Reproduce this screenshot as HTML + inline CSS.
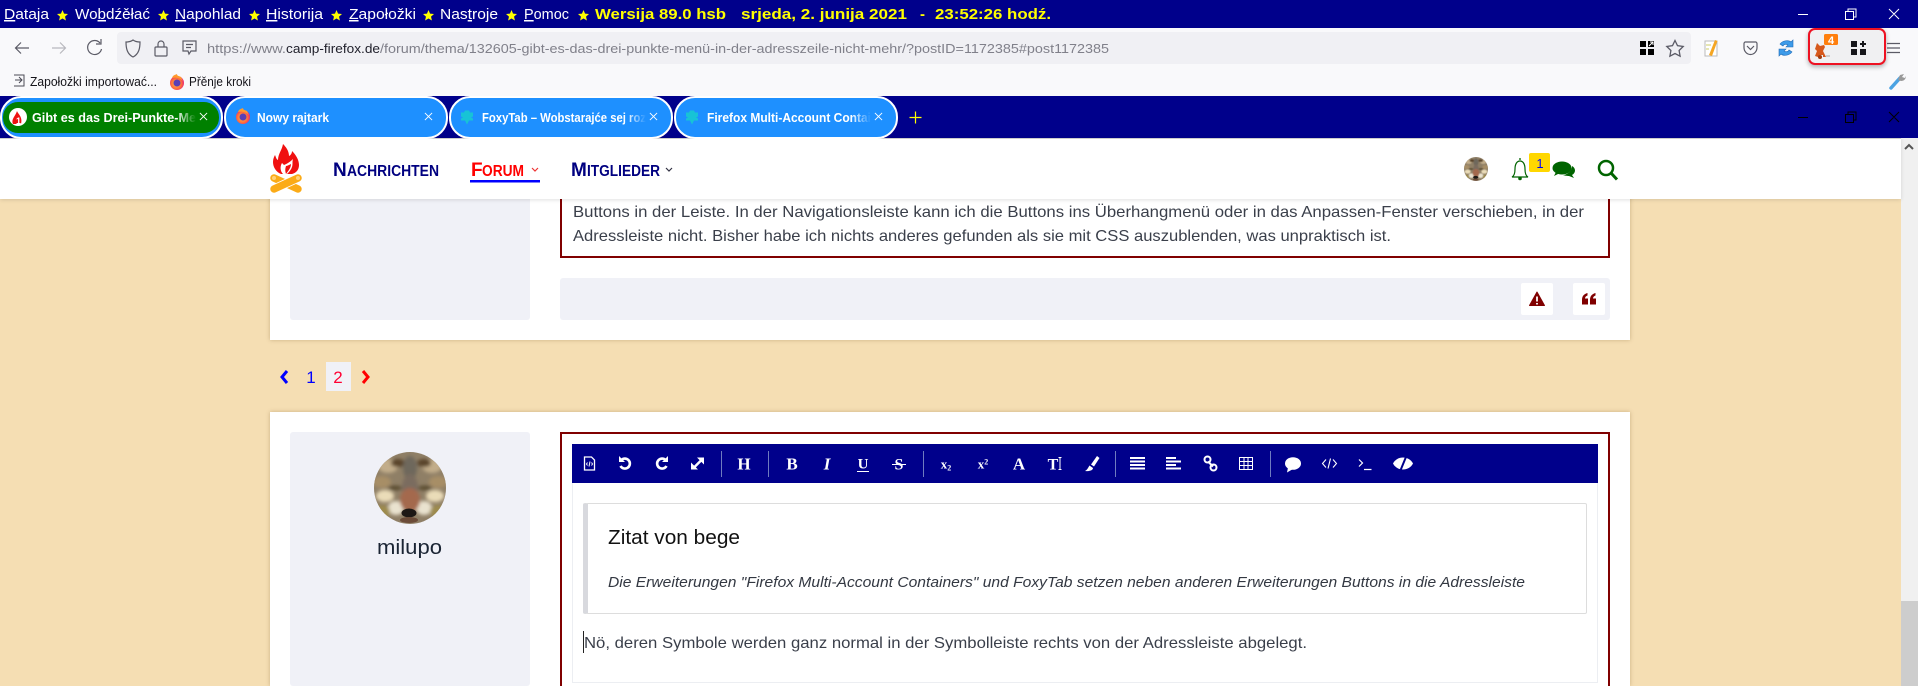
<!DOCTYPE html>
<html lang="de"><head><meta charset="utf-8"><title>Camp Firefox</title>
<style>
html,body{margin:0;padding:0;background:#f5deb3;width:1918px;height:686px;overflow:hidden}
.b{position:absolute;box-sizing:border-box}
svg{position:absolute;left:0;top:0}
text{font-family:"Liberation Sans",sans-serif;white-space:pre}
.u{text-decoration:underline}
</style></head><body>
<div class="b" style="left:0;top:0;width:1918px;height:28px;background:#00008b"></div>
<div class="b" style="left:0;top:28px;width:1918px;height:68px;background:#f9f9fb"></div>
<div class="b" style="left:117px;top:32px;width:1574px;height:32px;background:#f0f0f4;border-radius:4px"></div>
<div class="b" style="left:0;top:96px;width:1918px;height:42px;background:#00008b"></div>
<div class="b" style="left:1901px;top:138px;width:17px;height:548px;background:#f0f0f0"></div>
<div class="b" style="left:1901px;top:601px;width:17px;height:85px;background:#cdcdcd"></div>
<div class="b" style="left:270px;top:150px;width:1360px;height:190px;background:#fff;box-shadow:0 0 4px rgba(120,90,40,.35)"></div>
<div class="b" style="left:290px;top:190px;width:240px;height:130px;background:#f0f1f7;border-radius:3px"></div>
<div class="b" style="left:560px;top:190px;width:1050px;height:68px;border:solid #800000;border-width:0 2px 2px 2px"></div>
<div class="b" style="left:560px;top:278px;width:1050px;height:42px;background:#f0f1f7;border-radius:3px"></div>
<div class="b" style="left:1521px;top:283px;width:32px;height:32px;background:#fff;border-radius:2px"></div>
<div class="b" style="left:1573px;top:283px;width:32px;height:32px;background:#fff;border-radius:2px"></div>
<div class="b" style="left:0;top:138px;width:1901px;height:61px;background:#fff;box-shadow:0 1px 4px rgba(0,0,0,.12);border-top:1px solid #ccc"></div>
<div class="b" style="left:326px;top:362px;width:25px;height:29px;background:#f0f1f7"></div>
<div class="b" style="left:270px;top:412px;width:1360px;height:274px;background:#fff;box-shadow:0 0 4px rgba(120,90,40,.35)"></div>
<div class="b" style="left:290px;top:432px;width:240px;height:254px;background:#f0f1f7;border-radius:3px"></div>
<div class="b" style="left:560px;top:432px;width:1050px;height:254px;border:solid #800000;border-width:2px 2px 0 2px"></div>
<div class="b" style="left:572px;top:444px;width:1026px;height:39px;background:#00008b"></div>
<div class="b" style="left:572px;top:483px;width:1026px;height:200px;border:solid #eceef2;border-width:0 1px 1px 1px"></div>
<div class="b" style="left:583px;top:503px;width:1004px;height:111px;background:#fff;border:1px solid #ddd;border-left:5px solid #d8d9de;border-radius:2px"></div>
<div class="b" style="left:1808px;top:28px;width:78px;height:37px;border:2px solid #ee1122;border-radius:7px;background:#f0f0f2;box-shadow:0 2px 5px rgba(0,0,0,.3)"></div>

<svg width="1918" height="686" viewBox="0 0 1918 686" xmlns="http://www.w3.org/2000/svg">
<defs>
<symbol id="st" viewBox="0 0 10 10"><path d="M5 0l1.400 3.300 3.600.3-2.700 2.400.8 3.500L5 7.700 1.900 9.500l.8-3.500L0 3.600l3.600-.3z" fill="#ff0"/></symbol>
<linearGradient id="f1"><stop offset="0" stop-color="#008000" stop-opacity="0"/><stop offset="1" stop-color="#008000"/></linearGradient>
<linearGradient id="f2"><stop offset="0" stop-color="#1e90ff" stop-opacity="0"/><stop offset="1" stop-color="#1e90ff"/></linearGradient>
<radialGradient id="ff" cx=".45" cy=".55" r=".6"><stop offset="0" stop-color="#ffbd4f"/><stop offset=".6" stop-color="#ff7139"/><stop offset="1" stop-color="#e31587"/></radialGradient>
<filter id="bl" x="-20%" y="-20%" width="140%" height="140%"><feGaussianBlur stdDeviation="1.800"/></filter>
<clipPath id="cc"><circle cx="36" cy="36" r="36"/></clipPath>
<symbol id="wolf" viewBox="0 0 72 72"><g clip-path="url(#cc)"><rect width="72" height="72" fill="#8f7f66"/><g filter="url(#bl)">
<ellipse cx="14" cy="14" rx="10" ry="7" fill="#c2ad8a"/><ellipse cx="58" cy="14" rx="10" ry="7" fill="#c2ad8a"/>
<ellipse cx="24" cy="11" rx="7" ry="4" fill="#5a442c"/><ellipse cx="50" cy="11" rx="7" ry="4" fill="#5a442c"/>
<ellipse cx="36" cy="16" rx="7" ry="12" fill="#6e675c"/><ellipse cx="36" cy="36" rx="8" ry="14" fill="#7a6c5e"/>
<ellipse cx="8" cy="30" rx="9" ry="6" fill="#a78e66"/><ellipse cx="64" cy="30" rx="9" ry="6" fill="#a78e66"/>
<ellipse cx="11" cy="44" rx="9" ry="6" fill="#eadcb8"/><ellipse cx="61" cy="44" rx="9" ry="6" fill="#eadcb8"/>
<ellipse cx="22" cy="56" rx="8" ry="7" fill="#e9e2cf"/><ellipse cx="50" cy="56" rx="8" ry="7" fill="#e9e2cf"/>
<ellipse cx="8" cy="60" rx="8" ry="7" fill="#9d8b4d"/><ellipse cx="64" cy="60" rx="8" ry="7" fill="#9d8b4d"/>
<ellipse cx="36" cy="48" rx="10" ry="12" fill="#a4694e"/>
<ellipse cx="21" cy="36" rx="7" ry="2.500" fill="#5c4d30"/><ellipse cx="51" cy="36" rx="7" ry="2.500" fill="#5c4d30"/>
</g><ellipse cx="35" cy="61" rx="7.500" ry="4.500" fill="#1d1815"/><ellipse cx="35" cy="68" rx="9" ry="3" fill="#6b4b38"/></g></symbol>
<symbol id="firefox" viewBox="0 0 16 16"><circle cx="8" cy="9" r="7" fill="url(#ff)"/><path d="M3 4C4 1 6 1 8 0c0 2 2 2 4 3l2 4C11 4 7 3 3 4z" fill="#ff9a2e"/><circle cx="8" cy="9" r="3.500" fill="#5b3fb5"/></symbol>
<symbol id="puz" viewBox="0 0 16 16"><path d="M2 3h3l1-2h4l1 2h3v4l-2 1 2 1v2h-4l-2 4-2-4H2V9l2-1-2-1z" fill="#17c3d6"/></symbol>
<symbol id="x" viewBox="0 0 10 10"><path d="M1 1l8 8M9 1l-8 8" stroke="#fff" stroke-width="1"/></symbol>
</defs>

<!-- title bar -->
<g fill="#fff" font-size="15">
<text x="4" y="19" textLength="45" lengthAdjust="spacingAndGlyphs"><tspan class="u">D</tspan>ataja</text>
<text x="75" y="19" textLength="75" lengthAdjust="spacingAndGlyphs">Wo<tspan class="u">b</tspan>dźěłać</text>
<text x="175" y="19" textLength="66" lengthAdjust="spacingAndGlyphs"><tspan class="u">N</tspan>apohlad</text>
<text x="266" y="19" textLength="57" lengthAdjust="spacingAndGlyphs"><tspan class="u">H</tspan>istorija</text>
<text x="349" y="19" textLength="67" lengthAdjust="spacingAndGlyphs"><tspan class="u">Z</tspan>apołožki</text>
<text x="440" y="19" textLength="58" lengthAdjust="spacingAndGlyphs">Nas<tspan class="u">t</tspan>roje</text>
<text x="524" y="19" textLength="45" lengthAdjust="spacingAndGlyphs"><tspan class="u">P</tspan>omoc</text>
</g>
<use href="#st" x="57" y="10" width="11" height="11"/><use href="#st" x="158" y="10" width="11" height="11"/><use href="#st" x="249" y="10" width="11" height="11"/><use href="#st" x="331" y="10" width="11" height="11"/><use href="#st" x="423" y="10" width="11" height="11"/><use href="#st" x="506" y="10" width="11" height="11"/><use href="#st" x="578" y="10" width="11" height="11"/>
<g fill="#ff0" font-size="15" font-weight="bold">
<text x="595" y="19" textLength="131" lengthAdjust="spacingAndGlyphs">Wersija 89.0 hsb</text>
<text x="741" y="19" textLength="166" lengthAdjust="spacingAndGlyphs">srjeda, 2. junija 2021</text>
<text x="920" y="19">-</text>
<text x="935" y="19" textLength="116" lengthAdjust="spacingAndGlyphs">23:52:26 hodź.</text>
</g>
<g stroke="#fff" fill="none" stroke-width="1">
<path d="M1798 14.500h10M1845.500 11.500h8v8h-8zM1848 11.500v-2.500h8v8h-2.500M1889 9l10 10M1899 9l-10 10"/>
</g>

<!-- nav icons -->
<g fill="none" stroke="#5b5b66" stroke-width="1.200">
<path d="M29 48H16M21 42.500l-5.500 5.500 5.500 5.500"/>
<path d="M52 48h13M60 42.500l5.500 5.500-5.500 5.500" stroke="#b8b8be"/>
<path d="M100 43a7 7 0 1 0 1.500 6M101 39v5h-5"/>
<path d="M133 40c-2 1.500-4 2-7 2 0 6 1 12 7 15 6-3 7-9 7-15-3 0-5-.5-7-2z"/>
<rect x="155" y="47" width="12" height="9" rx="1"/><path d="M158 47v-3a3 3 0 0 1 6 0v3"/>
<path d="M183 41h13v10h-5l-2 3-1-3h-5zM186 44.500h7M186 47.500h5"/>
<path d="M1675 40.500l2.500 5.200 5.700.8-4.100 4 1 5.700-5.100-2.700-5.100 2.700 1-5.700-4.100-4 5.700-.8z" stroke-width="1.300"/>
<path d="M1745 42h11a2 2 0 0 1 1 1.500v4c0 4-3 7-6.500 7s-6.500-3-6.500-7v-4a2 2 0 0 1 1-1.500zM1747 46l3.500 3.500 3.500-3.500"/>
<path d="M1887 43.500h13M1887 48h13M1887 52.500h13" stroke-width="1.200"/>
</g>
<g font-size="13" fill="#80808a">
<text x="207" y="53" textLength="79" lengthAdjust="spacingAndGlyphs">https://www.</text>
<text x="286" y="53" textLength="94" lengthAdjust="spacingAndGlyphs" fill="#1f1f2a">camp-firefox.de</text>
<text x="380" y="53" textLength="729" lengthAdjust="spacingAndGlyphs">/forum/thema/132605-gibt-es-das-drei-punkte-menü-in-der-adresszeile-nicht-mehr/?postID=1172385#post1172385</text>
</g>
<g fill="#000"><rect x="1640" y="41" width="6" height="6"/><rect x="1648" y="41" width="6" height="6"/><rect x="1640" y="49" width="6" height="6"/><rect x="1648" y="49" width="6" height="6"/></g>
<path d="M1649 46l4-4M1650 42h3v3" stroke="#fff" stroke-width="1" fill="none"/>
<!-- notepad -->
<path d="M1705 41h12v15h-12z" fill="#fff" stroke="#bbb"/><path d="M1709 55l6-15 2.500 1-5.500 15z" fill="#f5a623"/><path d="M1706 45h5M1706 49h3" stroke="#cc6"/>
<!-- sync -->
<path d="M1780 44c3-4 9-4 11-2l2-2v7h-7l2-2c-2-1-4-1-5 1z" fill="#3d9be9" stroke="#1e6bb8" stroke-width=".6"/><path d="M1792 52c-3 4-9 4-11 2l-2 2v-7h7l-2 2c2 1 4 1 5-1z" fill="#3d9be9" stroke="#1e6bb8" stroke-width=".6"/>
<!-- fox + badge -->
<path d="M1817 43l3 3 4-1 1 2-2 4 3 6h-3v-2h-3l-2 2-3-1 2-5-2-2z" fill="#d6581c"/><circle cx="1820" cy="57" r="2" fill="#a33c0f"/><path d="M1826 56h4" stroke="#aaa"/>
<rect x="1824" y="34" width="14" height="11" rx="1.500" fill="#ff7f0e"/>
<text x="1831" y="44" fill="#fff" font-size="11" font-weight="bold" text-anchor="middle">4</text>
<g fill="#16161a"><rect x="1851" y="41" width="6" height="6"/><rect x="1851" y="49" width="6" height="6"/><rect x="1860" y="49" width="6" height="6"/><path d="M1862 41h2v2h2v2h-2v2h-2v-2h-2v-2h2z"/></g>

<!-- bookmarks -->
<path d="M15 80h7M19 77l3 3-3 3M14 75h10v11H14" fill="none" stroke="#4a4a55"/>
<text x="30" y="86" font-size="12.500" fill="#15141a" textLength="127" lengthAdjust="spacingAndGlyphs">Zapołožki importować...</text>
<use href="#firefox" x="169" y="74" width="16" height="16"/>
<text x="189" y="86" font-size="12.500" fill="#15141a" textLength="62" lengthAdjust="spacingAndGlyphs">Přěnje kroki</text>
<path d="M1891 88l9-10" stroke="#4ba3e3" stroke-width="3.500" stroke-linecap="round"/><path d="M1898 80l2-5 4-1-2 3 3 1 1-2c0 3-2 5-5 5z" fill="#999"/>

<!-- tabs -->
<g fill="#1e90ff" stroke="#fff" stroke-width="2">
<rect x="1" y="97" width="221" height="41" rx="20"/>
<rect x="225" y="97" width="222" height="41" rx="20"/>
<rect x="450" y="97" width="222" height="41" rx="20"/>
<rect x="675" y="97" width="222" height="41" rx="20"/>
</g>
<rect x="3" y="102" width="216" height="31" rx="15" fill="#008000"/>
<circle cx="18" cy="117" r="9" fill="#fff"/><path d="M13 124c-2-5 2-7 4-13 1 3 6 6 4 13z" fill="#e11"/><text x="16" y="124" fill="#fff" font-size="9" font-weight="bold">1</text>
<use href="#firefox" x="235" y="108" width="16" height="16"/>
<use href="#puz" x="459" y="109" width="16" height="17"/>
<use href="#puz" x="684" y="109" width="16" height="17"/>
<g fill="#fff" font-size="13" font-weight="bold">
<text x="32" y="122" textLength="164" lengthAdjust="spacingAndGlyphs">Gibt es das Drei-Punkte-Me</text>
<text x="257" y="122" textLength="72" lengthAdjust="spacingAndGlyphs">Nowy rajtark</text>
<text x="482" y="122" textLength="164" lengthAdjust="spacingAndGlyphs">FoxyTab – Wobstarajće sej roz</text>
<text x="707" y="122" textLength="164" lengthAdjust="spacingAndGlyphs">Firefox Multi-Account Contai</text>
</g>
<rect x="176" y="106" width="20" height="22" fill="url(#f1)"/>
<rect x="626" y="106" width="20" height="22" fill="url(#f2)"/>
<rect x="851" y="106" width="20" height="22" fill="url(#f2)"/>
<use href="#x" x="199" y="112" width="9" height="9"/><use href="#x" x="424" y="112" width="9" height="9"/><use href="#x" x="649" y="112" width="9" height="9"/><use href="#x" x="874" y="112" width="9" height="9"/>
<path d="M909.500 117.500h12M915.500 111.500v12" stroke="#ff0" stroke-width="1.200"/>
<path d="M1798 117.500h10M1845.500 114.500h8v8h-8zM1848 114.500v-2.500h8v8h-2.500M1889 112l10 10M1899 112l-10 10" stroke="#000" fill="none"/>

<!-- header -->
<path d="M281 174c-5-2-8-7-8-12 0-3 1-5 2-7 1 2 1 4 3 5 0-6 4-10 5-16 3 3 6 7 6 12 2-1 3-3 3-5 4 4 7 9 7 14 0 5-3 8-7 9z" fill="#f01010"/>
<path d="M283 174c-3-3-3-8-1-11l2 2c2-1 5-2 9-6-1 3 0 5-1 8s-3 5-5 7z" fill="#fff"/>
<path d="M286 174c2-3 5-6 5-10-2 1-4 2-5 2-1 3-1 5 0 8z" fill="#f01010"/>
<path d="M274 178l24 11" stroke="#fbab17" stroke-width="7.500" stroke-linecap="round"/>
<path d="M298 178l-24 11" stroke="#fff" stroke-width="9"/>
<path d="M298 178l-24 11" stroke="#fbab17" stroke-width="7.500" stroke-linecap="round"/>
<circle cx="298" cy="178" r="2" fill="#ffd27a"/><circle cx="274" cy="178" r="2" fill="#ffd27a"/>
<g font-weight="bold" fill="#000080">
<text x="333" y="176" font-size="19">N</text><text x="347" y="176" font-size="15.500" textLength="92" lengthAdjust="spacingAndGlyphs">ACHRICHTEN</text>
<text x="471" y="176" font-size="19" fill="#ff0000">F</text><text x="482" y="176" font-size="15.500" fill="#ff0000" textLength="42" lengthAdjust="spacingAndGlyphs">ORUM</text>
<text x="571" y="176" font-size="19">M</text><text x="587" y="176" font-size="15.500" textLength="73" lengthAdjust="spacingAndGlyphs">ITGLIEDER</text>
</g>
<path d="M532 168l3 3 3-3" stroke="#e33" stroke-width="1.200" fill="none"/><path d="M666 168l3 3 3-3" stroke="#334" stroke-width="1.200" fill="none"/>
<rect x="470" y="180" width="70" height="2.500" fill="#0000ff"/>
<use href="#wolf" x="1464" y="157" width="24" height="24"/>
<path d="M1512 177c2-1 3-3 3-8 0-5 2-8 5-8s5 3 5 8c0 5 1 7 3 8z" fill="none" stroke="#006400" stroke-width="1.200"/><circle cx="1520" cy="178.500" r="1.800" fill="#006400"/><path d="M1520 160v-2" stroke="#006400" stroke-width="1.300"/>
<rect x="1529" y="153" width="21" height="19" rx="2" fill="#ffd700"/>
<text x="1540" y="168" font-size="13" fill="#0000ff" text-anchor="middle">1</text>
<ellipse cx="1562" cy="168" rx="9.500" ry="6.500" fill="#006400"/><path d="M1556 172l-2 4 6-3z" fill="#006400"/><path d="M1572 166c4 2 4 7 0 9l2 3-5-2c-2 0-5-.5-6-1 4 0 9-4 9-9z" fill="#006400"/>
<circle cx="1606" cy="168" r="7" fill="none" stroke="#006400" stroke-width="2.500"/><path d="M1611 173l6 6.500" stroke="#006400" stroke-width="3"/>
<path d="M1905 149l4-4 4 4" stroke="#555" stroke-width="2" fill="none"/>

<!-- post -->
<g fill="#3a3f4a" font-size="16">
<text x="573" y="217" textLength="1011" lengthAdjust="spacingAndGlyphs">Buttons in der Leiste. In der Navigationsleiste kann ich die Buttons ins Überhangmenü oder in das Anpassen-Fenster verschieben, in der</text>
<text x="573" y="241" textLength="818" lengthAdjust="spacingAndGlyphs">Adressleiste nicht. Bisher habe ich nichts anderes gefunden als sie mit CSS auszublenden, was unpraktisch ist.</text>
</g>
<path d="M1537 292l7.500 13.500h-15z" fill="#800000" stroke="#800000" stroke-linejoin="round"/><path d="M1537 296.500v5M1537 303v1.500" stroke="#fff" stroke-width="1.800"/>
<path d="M1582 300c0-4 2-6 5.500-7v2.500c-1.500.5-2.500 1.500-2.500 3h3v6h-6zM1590 300c0-4 2-6 5.500-7v2.500c-1.500.5-2.500 1.500-2.500 3h3v6h-6z" fill="#800000"/>

<!-- pagination -->
<path d="M287 371l-5 6 5 6" stroke="#0000ff" stroke-width="3" fill="none"/>
<text x="311" y="383" font-size="17" fill="#0000ff" text-anchor="middle">1</text>
<text x="338" y="383" font-size="17" fill="#ff0033" text-anchor="middle">2</text>
<path d="M363 371l5 6-5 6" stroke="#ff0000" stroke-width="3" fill="none"/>

<!-- avatar -->
<use href="#wolf" x="374" y="452" width="72" height="72"/>
<text x="377" y="554" font-size="20" fill="#1a2433" textLength="65" lengthAdjust="spacingAndGlyphs">milupo</text>

<!-- toolbar -->
<g stroke="#6f7bc0" stroke-width="1"><path d="M721.500 451v26M768.500 451v26M923.500 451v26M1115.500 451v26M1270.500 451v26"/></g>
<g transform="translate(0,-1.500)">
<g fill="none" stroke="#fff" stroke-width="1.800">
<path d="M584.500 458.500h7l3 3v10h-10z" stroke-width="1.300"/><path d="M587.500 464l-1 1.500 1 1.500M591.500 464l1 1.500-1 1.500M589 468l1-5" stroke-width="1"/>
<path d="M622 461a5 5 0 1 1-1.500 6.500" stroke-width="2.600"/><path d="M619 457.500v6h6z" fill="#fff" stroke="none"/>
<path d="M665 461a5 5 0 1 0 1.500 6.500" stroke-width="2.600"/><path d="M668 457.500v6h-6z" fill="#fff" stroke="none"/>
<path d="M694 469l7-7" stroke-width="2.500"/><path d="M697 459h7v7zM691 464v7h7z" fill="#fff" stroke="none"/>
<path d="M1130 459.500h15M1130 463h15M1130 466.500h15M1130 470h15" stroke-width="2"/>
<path d="M1166 459.500h10M1166 463h15M1166 466.500h10M1166 470h15" stroke-width="2"/>
<path d="M1208 463l5 5" stroke-width="2"/><circle cx="1207.500" cy="461" r="3" stroke-width="2"/><circle cx="1213.500" cy="469" r="3" stroke-width="2"/>
<rect x="1239.500" y="459" width="13" height="12" stroke-width="1"/><path d="M1240 463h12M1240 467h12M1244 459v12M1248 459v12" stroke-width="1"/>
<path d="M1326 461l-3.500 4 3.500 4M1333 461l3.500 4-3.500 4M1328 470l2.500-10" stroke-width="1.100"/>
<path d="M1359 461l3.500 3.500-3.500 3.500M1364 471h7.500" stroke-width="1.200"/>
<path d="M1393 465c2-4 6-6 10-6s8 2 10 6c-2 4-6 6-10 6s-8-2-10-6z" fill="#fff" stroke="none"/><path d="M1407 456l-7 17" stroke="#00008b" stroke-width="2"/>
</g>
<g fill="#fff">
<text x="744" y="471" font-size="17" font-weight="bold" text-anchor="middle" style="font-family:'Liberation Serif'">H</text>
<text x="792" y="471" font-size="17" font-weight="bold" text-anchor="middle" style="font-family:'Liberation Serif'">B</text>
<text x="827" y="471" font-size="17" font-weight="bold" font-style="italic" text-anchor="middle" style="font-family:'Liberation Serif'">I</text>
<text x="863" y="470" font-size="15" font-weight="bold" text-anchor="middle" style="font-family:'Liberation Serif'">U</text>
<text x="899" y="471" font-size="16" font-weight="bold" text-anchor="middle" style="font-family:'Liberation Serif'">S</text>
<text x="946" y="470" font-size="13" font-weight="bold" text-anchor="middle" style="font-family:'Liberation Serif'">x<tspan font-size="8" dy="2">2</tspan></text>
<text x="983" y="470" font-size="13" font-weight="bold" text-anchor="middle" style="font-family:'Liberation Serif'">x<tspan font-size="8" dy="-4">2</tspan></text>
<text x="1019" y="471" font-size="17" font-weight="bold" text-anchor="middle" style="font-family:'Liberation Serif'">A</text>
<text x="1053" y="471" font-size="16" font-weight="bold" text-anchor="middle" style="font-family:'Liberation Serif'">T</text>
</g>
<path d="M1060 459v12M1058.500 459h3M1058.500 471h3" stroke="#fff" stroke-width="1"/>
<path d="M857 473h12M892 466h14" stroke="#fff" stroke-width="1"/>
<path d="M1097 457.500l2.500 2-5.500 8.500-3-2zM1089.500 467l3.500 2.500c0 2.500-4 3.500-8 3 2-1 3-3 4.500-5.500z" fill="#fff"/>
<ellipse cx="1293" cy="465" rx="8" ry="6.300" fill="#fff"/><path d="M1288 469l-1 5 6-3.500z" fill="#fff"/>
</g>

<!-- editor text -->
<text x="608" y="544" font-size="20" fill="#111" textLength="132" lengthAdjust="spacingAndGlyphs">Zitat von bege</text>
<text x="608" y="587" font-size="15" font-style="italic" fill="#333842" textLength="917" lengthAdjust="spacingAndGlyphs">Die Erweiterungen "Firefox Multi-Account Containers" und FoxyTab setzen neben anderen Erweiterungen Buttons in die Adressleiste</text>
<text x="584" y="648" font-size="16" fill="#3a3f4a" textLength="723" lengthAdjust="spacingAndGlyphs">Nö, deren Symbole werden ganz normal in der Symbolleiste rechts von der Adressleiste abgelegt.</text>
<path d="M583.500 631v22" stroke="#222" stroke-width="1"/>
</svg>
</body></html>
